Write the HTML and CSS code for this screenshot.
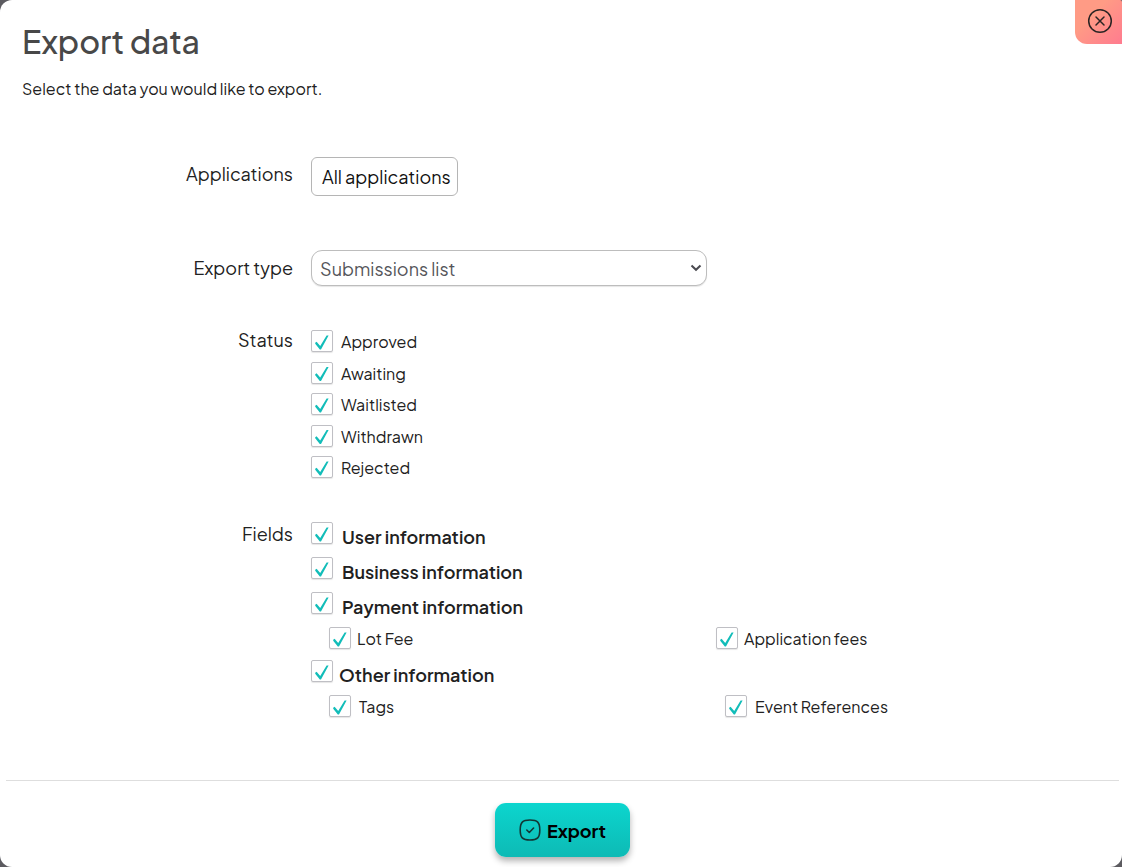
FILE: index.html
```html
<!DOCTYPE html>
<html lang="en">

<head>
    <meta charset="UTF-8">
    <meta name="viewport" content="width=device-width, initial-scale=1.0">
    <title>Export data</title>
    <link rel="stylesheet" href="styles.css">
</head>

<body>
    <div class="modal" role="dialog" aria-labelledby="modalTitle">
        <button class="close-btn" type="button" aria-label="Close">
            <svg width="26" height="26" viewBox="0 0 26 26" fill="none" stroke="#2b2424" stroke-width="1.5" stroke-linecap="round">
                <circle cx="13" cy="13" r="11.3" />
                <path d="M9 9l8 8M17 9l-8 8" />
            </svg>
        </button>

        <header class="modal-header">
            <h1 id="modalTitle">Export data</h1>
            <p>Select the data you would like to export.</p>
        </header>

        <form id="exportForm" class="modal-body">
            <div class="form-row row-applications">
                <label class="row-label" for="applications">Applications</label>
                <button class="picker" type="button" id="applications">All applications</button>
            </div>

            <div class="form-row row-type">
                <label class="row-label" for="exportType">Export type</label>
                <div class="select-wrap">
                    <select id="exportType">
                        <option>Submissions list</option>
                    </select>
                    <svg class="chevron" width="12" height="8" viewBox="0 0 12 8" fill="none" stroke="#4a4a50" stroke-width="2">
                        <path d="M1.5 1.5L6 5.8l4.500-4.300" />
                    </svg>
                </div>
            </div>

            <div class="form-row row-status">
                <span class="row-label" id="statusLabel">Status</span>
                <div class="status-list" role="group" aria-labelledby="statusLabel">
                    <div class="check"><input type="checkbox" id="approved" checked><label for="approved">Approved</label></div>
                    <div class="check"><input type="checkbox" id="awaiting" checked><label for="awaiting">Awaiting</label></div>
                    <div class="check"><input type="checkbox" id="waitlisted" checked><label for="waitlisted">Waitlisted</label></div>
                    <div class="check"><input type="checkbox" id="withdrawn" checked><label for="withdrawn">Withdrawn</label></div>
                    <div class="check"><input type="checkbox" id="rejected" checked><label for="rejected">Rejected</label></div>
                </div>
            </div>

            <div class="form-row row-fields">
                <span class="row-label" id="fieldsLabel">Fields</span>
                <div class="field-list" role="group" aria-labelledby="fieldsLabel">
                    <div class="check group"><input type="checkbox" id="userInfo" checked><label for="userInfo">User information</label></div>
                    <div class="check group"><input type="checkbox" id="businessInfo" checked><label for="businessInfo">Business information</label></div>
                    <div class="check group"><input type="checkbox" id="paymentInfo" checked><label for="paymentInfo">Payment information</label></div>
                    <div class="sub-fields payment">
                        <div class="check"><input type="checkbox" id="lotFee" checked><label for="lotFee">Lot Fee</label></div>
                        <div class="check"><input type="checkbox" id="appFees" checked><label for="appFees">Application fees</label></div>
                    </div>
                    <div class="check group other"><input type="checkbox" id="otherInfo" checked><label for="otherInfo">Other information</label></div>
                    <div class="sub-fields">
                        <div class="check"><input type="checkbox" id="tags" checked><label for="tags">Tags</label></div>
                        <div class="check"><input type="checkbox" id="eventRefs" checked><label for="eventRefs">Event References</label></div>
                    </div>
                </div>
            </div>
        </form>

        <footer class="modal-footer">
            <button class="export-btn" type="submit" form="exportForm">
                <svg width="22" height="22" viewBox="0 0 22 22" fill="none" stroke="#123634" stroke-width="1.600" stroke-linecap="round" stroke-linejoin="round">
                    <path d="M11 1c7.500 0 9.800 2.300 9.800 10S18.500 21 11 21 1.200 18.700 1.200 11 3.500 1 11 1z" />
                    <path d="M7.800 11l2.500 2.500 4.300-4.500" />
                </svg>
                Export
            </button>
        </footer>
    </div>
</body>

</html>
```

FILE: styles.css
```css
* {
    box-sizing: border-box;
}

body {
    margin: 0;
    background-color: #5c5b60;
    font-family: "Plus Jakarta Sans", Inter, sans-serif;
    font-size: 16px;
    color: #212121;
}

button, select {
    font-family: inherit;
}

.modal {
    position: relative;
    display: flex;
    flex-direction: column;
    min-height: 100vh;
    background: #ffffff;
    border-radius: 12px;
}

.close-btn {
    position: absolute;
    top: 0;
    right: 0;
    width: 47px;
    height: 44px;
    padding: 8px 9px 10px 12px;
    border: none;
    border-radius: 0 2px 0 12px;
    background: linear-gradient(135deg, #ff9b85 35%, #ff7b8f);
    cursor: pointer;
}

.close-btn svg {
    display: block;
}

.modal-header {
    padding: 19px 22px 0;
}

h1 {
    margin: 0;
    font-size: 32px;
    line-height: 44px;
    font-weight: 500;
    color: #484848;
}

.modal-header p {
    margin: 14px 0 0;
    font-size: 16px;
    line-height: 24px;
}

.modal-body {
    flex: 1;
    padding: 56px 22px 0 24px;
}

.form-row {
    display: grid;
    grid-template-columns: 25% 1fr;
    column-gap: 18px;
    align-items: start;
}

.row-label {
    font-size: 18px;
    line-height: 24px;
    text-align: right;
}

.row-applications .row-label {
    padding-top: 5px;
}

.row-type {
    margin-top: 54px;
}

.row-type .row-label {
    padding-top: 6px;
}

.row-status {
    margin-top: 42px;
}

.status-list {
    display: flex;
    flex-direction: column;
    justify-content: space-between;
    min-height: 150px;
    padding-top: 2px;
}

.row-fields {
    margin-top: 44px;
}

.picker {
    justify-self: start;
    width: 147px;
    height: 39px;
    padding: 0 0 0 10px;
    border: 1px solid #b5b5b5;
    border-radius: 6px;
    background: #ffffff;
    color: #111111;
    font-size: 18px;
    text-align: left;
    white-space: nowrap;
}

.select-wrap {
    position: relative;
    width: 396px;
    max-width: 100%;
}

select {
    display: block;
    appearance: none;
    width: 100%;
    height: 36px;
    padding: 0 30px 0 8px;
    border: 1px solid #bdbdbd;
    border-radius: 11px;
    background: #ffffff;
    box-shadow: 0 1px 1px rgba(0, 0, 0, 0.1);
    color: #55555a;
    font-size: 18px;
}

.chevron {
    position: absolute;
    top: 14px;
    right: 5px;
    pointer-events: none;
}

.check {
    display: flex;
    align-items: flex-start;
    gap: 8px;
}

.check label {
    padding-top: 2px;
    line-height: 20px;
}

.check input {
    appearance: none;
    flex: none;
    width: 22px;
    height: 22px;
    margin: 0;
    border: 1px solid #bfbfc4;
    border-radius: 2px;
    background: #ffffff;
    box-shadow: 0 1px 1px rgba(0, 0, 0, 0.1);
}

/* tick mark */
.check input:checked::before {
    content: "";
    display: block;
    width: 20px;
    height: 20px;
    background: #12bdb9;
    clip-path: polygon(16% 59%, 23% 54%, 41% 75%, 73% 22%, 83% 22%, 45% 92%, 39% 92%, 16% 64%);
}

.field-list {
    display: flex;
    flex-direction: column;
    gap: 11px;
}

.group {
    gap: 9px;
}

.group label {
    padding-top: 5px;
    font-size: 18px;
    font-weight: 600;
    line-height: 19px;
}

.group.other {
    gap: 6px;
}

.sub-fields {
    display: grid;
    grid-template-columns: 396px 1fr;
    padding-left: 18px;
}

.sub-fields.payment {
    grid-template-columns: 387px 1fr;
}

.sub-fields.payment .check {
    gap: 6px;
}

.modal-footer {
    display: flex;
    justify-content: center;
    margin: 0 3px 0 6px;
    padding: 22px 0 10px;
    border-top: 1px solid #dedede;
}

.export-btn {
    display: flex;
    align-items: center;
    justify-content: center;
    gap: 6px;
    width: 135px;
    height: 54px;
    border: none;
    border-radius: 11px;
    background: linear-gradient(#0cd5ce, #0dbab5);
    box-shadow: 0 4px 6px rgba(0, 0, 0, 0.3);
    color: #000000;
    font-size: 18px;
    font-weight: 700;
    cursor: pointer;
}
```
